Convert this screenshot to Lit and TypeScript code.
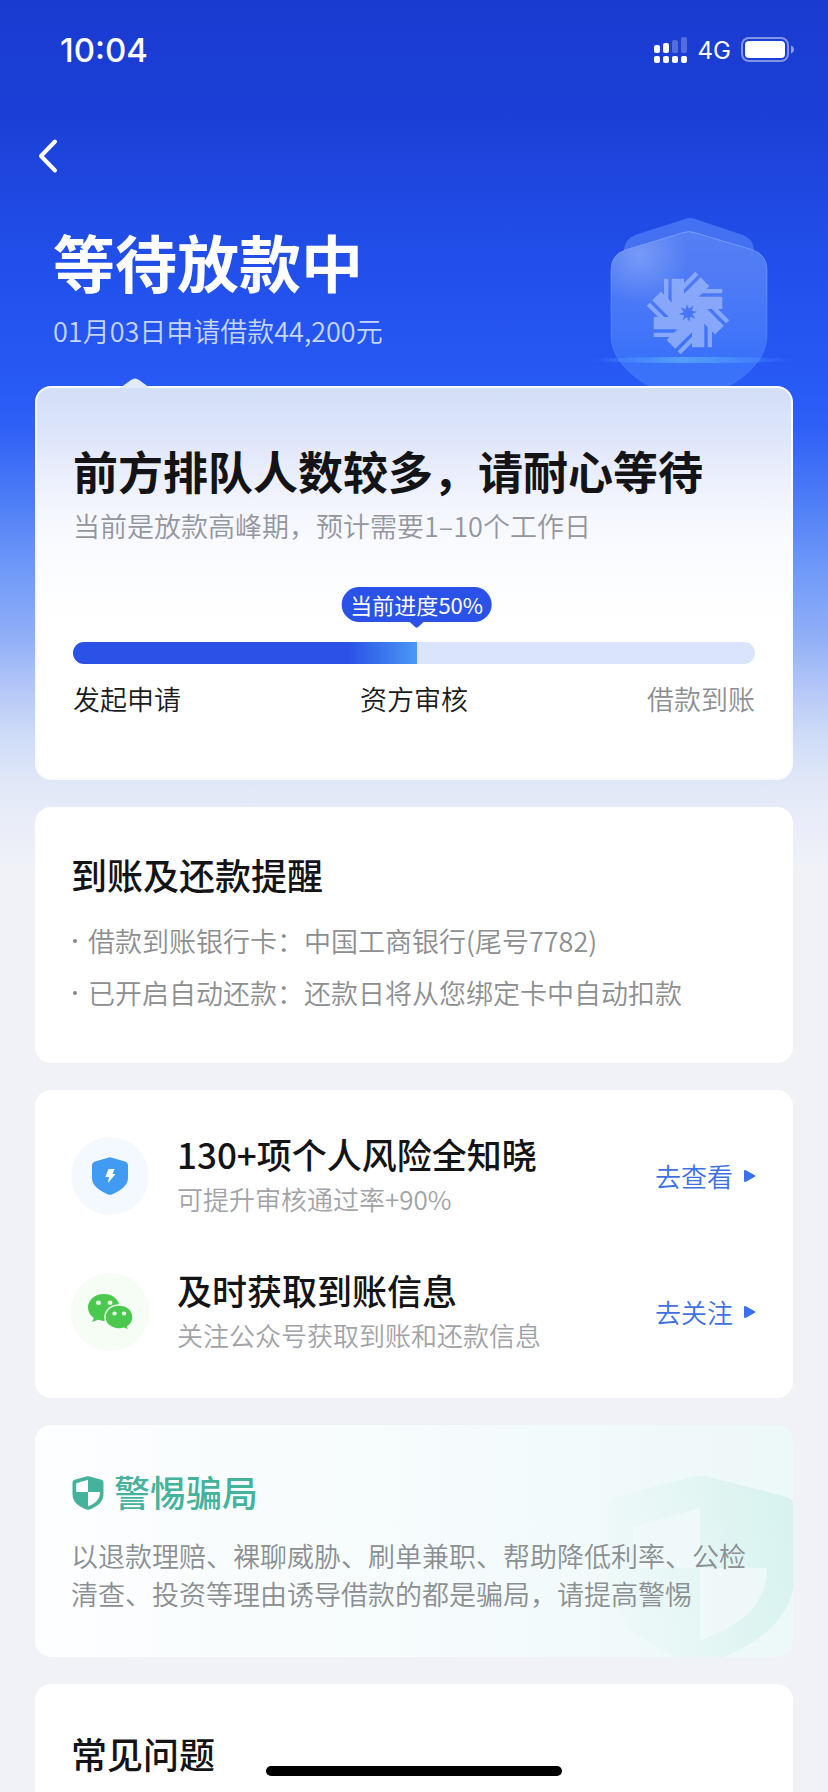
import { LitElement, html, css, svg } from "lit";
import { customElement, property } from "lit/decorators.js";

const shieldFront =
  "M682 233 Q689 230 696 233 L753 250 Q767 255 767 270 L767 335 C767 362 740 388 689 402 C638 388 611 362 611 335 L611 270 Q611 255 625 250 Z";
const shieldBack =
  "M682 220 Q690 216 698 220 L743 235 Q754 240 754 250 L754 330 L624 330 L624 250 Q624 240 635 235 Z";
const spokes = [0, 45, 90, 135, 180, 225, 270, 315];

@customElement("status-bar")
class StatusBar extends LitElement {
  static styles = css`
    :host {
      display: flex;
      align-items: center;
      justify-content: space-between;
      height: 100px;
      padding: 0 33px 0 60px;
      color: #fff;
      font-family: Inter, "Liberation Sans", sans-serif;
    }
    .time {
      font-size: 33px;
      font-weight: 500;
    }
    .right {
      display: flex;
      align-items: center;
      gap: 10px;
      font-size: 24px;
    }
  `;
  render() {
    return html`
      <span class="time">10:04</span>
      <div class="right">
        <svg width="34" height="28" viewBox="0 0 34 28" fill="#fff" aria-hidden="true">
          <rect x="0" y="9" width="6" height="8" rx="2" />
          <rect x="9" y="7" width="6" height="10" rx="2" />
          <rect x="18" y="4" width="6" height="13" rx="2" opacity=".25" />
          <rect x="27" y="1" width="6" height="16" rx="2" opacity=".25" />
          ${[0, 9, 18, 27].map((x) => svg`<rect x=${x} y="20" width="6" height="7" rx="2"></rect>`)}
        </svg>
        <span>4G</span>
        <svg width="54" height="26" viewBox="0 0 54 26" aria-hidden="true">
          <rect x="1" y="1" width="46" height="23" rx="7" fill="none" stroke="#fff" stroke-opacity=".45" stroke-width="2" />
          <rect x="4" y="4" width="40" height="17" rx="4" fill="#fff" />
          <path d="M50 8.500c2 .8 3 2 3 4s-1 3.200-3 4z" fill="#fff" opacity=".5" />
        </svg>
      </div>
    `;
  }
}

@customElement("hero-shield")
class HeroShield extends LitElement {
  static styles = css`
    :host {
      display: block;
      line-height: 0;
    }
  `;
  render() {
    return html`
      <svg width="205" height="170" viewBox="590 216 205 170" aria-hidden="true">
        <defs>
          <linearGradient id="front" x1="0" y1="0" x2="0" y2="1">
            <stop offset="0" stop-color="#557ff3" />
            <stop offset=".35" stop-color="#4c7af6" />
            <stop offset=".75" stop-color="#3a71fa" />
            <stop offset="1" stop-color="#3d74fb" />
          </linearGradient>
          <radialGradient id="shine" cx="640" cy="256" r="48" gradientUnits="userSpaceOnUse">
            <stop offset="0" stop-color="#fff" stop-opacity=".22" />
            <stop offset="1" stop-color="#fff" stop-opacity="0" />
          </radialGradient>
          <linearGradient id="rim" x1="0" y1="0" x2="0" y2="1">
            <stop offset="0" stop-color="#8fb2ff" stop-opacity=".6" />
            <stop offset="1" stop-color="#6f9dff" stop-opacity=".1" />
          </linearGradient>
          <linearGradient id="beam" x1="592" y1="0" x2="794" y2="0" gradientUnits="userSpaceOnUse">
            <stop offset="0" stop-color="#58a6ff" stop-opacity="0" />
            <stop offset=".45" stop-color="#58a6ff" stop-opacity=".85" />
            <stop offset="1" stop-color="#58a6ff" stop-opacity="0" />
          </linearGradient>
          <mask id="star" x="-130" y="-130" width="260" height="260" maskUnits="userSpaceOnUse">
            <rect x="-130" y="-130" width="260" height="260" fill="#fff" />
            ${spokes.map((a) => svg`<path d="M-8 0L-4 -28L8 0Z" transform="rotate(${a})" fill="#000"></path>`)}
            <circle r="14" fill="#000" />
          </mask>
        </defs>
        <path d=${shieldBack} fill="#4371f1" />
        <path d=${shieldFront} fill="url(#front)" />
        <path d=${shieldFront} fill="url(#shine)" />
        <path d=${shieldFront} fill="none" stroke="url(#rim)" />
        <g transform="translate(688 313) scale(.333)" opacity=".9" fill="#8fadfb">
          <g mask="url(#star)">
            <circle r="42" />
            ${spokes.map(
              (a) => svg`<g transform="rotate(${a})">
                <path d="M-72 -103H-59V-36H-72Z"></path>
                <path d="M-49 -103H-12V-10H-49Z"></path>
              </g>`,
            )}
          </g>
        </g>
        <ellipse cx="693" cy="360" rx="101" ry="3" fill="url(#beam)" />
      </svg>
    `;
  }
}

@customElement("loan-progress")
class LoanProgress extends LitElement {
  @property({ type: Number }) value = 0;

  static styles = css`
    :host {
      display: block;
    }
    .tip-row {
      display: flex;
    }
    .tip {
      display: flex;
      flex-direction: column;
      align-items: center;
      transform: translateX(-50%);
    }
    .tip-label {
      height: 35px;
      padding: 0 9px;
      border-radius: 18px;
      background: #2b52e8;
      color: #fff;
      font-size: 22px;
      line-height: 34px;
      white-space: nowrap;
    }
    .tip-arrow {
      display: block;
      width: 16px;
      height: 7px;
      margin-top: -1px;
    }
    .track {
      height: 22px;
      margin-top: 14px;
      border-radius: 11px;
      background: #dae4fa;
      overflow: hidden;
    }
    .fill {
      height: 100%;
      background: linear-gradient(90deg, #2b52e6 0 80%, #4a98f6);
    }
    .steps {
      display: flex;
      justify-content: space-between;
      margin-top: 16px;
      font-size: 27px;
      font-weight: 350;
      line-height: 38px;
      color: #1b1b1e;
    }
    .pending {
      color: #8e8f94;
    }
  `;
  render() {
    return html`
      <div class="tip-row">
        <div class="tip" style="margin-left:${this.value}%">
          <span class="tip-label">当前进度${Math.round(this.value)}%</span>
          <svg class="tip-arrow" viewBox="0 0 16 7" aria-hidden="true">
            <path d="M0 0H16L9.500 6Q8 7.500 6.500 6Z" fill="#2b52e8" />
          </svg>
        </div>
      </div>
      <div class="track" role="progressbar" aria-label="当前进度" aria-valuenow=${Math.round(this.value)}>
        <div class="fill" style="width:${this.value}%"></div>
      </div>
      <div class="steps">
        <span>发起申请</span>
        <span>资方审核</span>
        <span class="pending">借款到账</span>
      </div>
    `;
  }
}

@customElement("app-root")
class AppRoot extends LitElement {
  static styles = css`
    :host {
      display: flex;
      flex-direction: column;
      box-sizing: border-box;
      min-height: 100vh;
      font-family: "Noto Sans CJK SC", sans-serif;
      color: #141416;
      background: #f0f2f8
        linear-gradient(
          #1a3bd0 0,
          #1b3fd6 110px,
          #1f49e2 200px,
          #2453ef 310px,
          #285af6 390px,
          #3061f6 430px,
          #4f7ff6 505px,
          #709af8 570px,
          #90aff7 637px,
          #b3c6f8 687px,
          #cfdcf8 737px,
          #e1e8f7 785px,
          #eaedf9 825px,
          #f0f2f8 870px
        )
        no-repeat;
    }
    h1,
    h2,
    h3,
    p,
    ul {
      margin: 0;
      padding: 0;
      font-weight: 500;
    }
    .nav {
      display: flex;
      align-items: center;
      height: 112px;
      padding: 0 28px;
    }
    .back {
      display: flex;
      padding: 8px;
      border: 0;
      background: none;
    }
    .hero {
      display: flex;
      align-items: flex-end;
      justify-content: space-between;
      height: 174px;
      padding: 0 33px 0 53px;
    }
    .hero-text {
      align-self: flex-start;
    }
    .hero h1 {
      font-size: 62px;
      line-height: 98px;
      color: #fff;
      font-weight: 700;
    }
    .hero p {
      font-size: 27px;
      line-height: 42px;
      color: #c6d6fe;
      font-weight: 350;
    }
    .cards {
      display: flex;
      flex: 1;
      flex-direction: column;
      gap: 27px;
      padding: 0 35px;
    }
    .card {
      position: relative;
      border-radius: 16px;
      background: #fff;
      padding: 0 36px;
    }
    .status {
      padding: 51px 36px 60px;
      border: 2px solid #f8fbff;
      background: linear-gradient(#d3dff7 0, #dce5fa 45px, #e9edfc 80px, #f5f7fe 125px, #fbfcff 170px, #fff 240px);
    }
    .notch {
      position: absolute;
      top: -10px;
      left: 83px;
    }
    .status h2 {
      font-size: 45px;
      line-height: 64px;
      font-weight: 700;
    }
    .status p {
      margin-bottom: 38px;
      font-size: 27px;
      line-height: 46px;
      color: #94969e;
      font-weight: 350;
    }
    .title {
      font-size: 36px;
      line-height: 52px;
    }
    .reminder {
      padding-top: 41px;
      padding-bottom: 44px;
    }
    .list {
      display: grid;
      padding-top: 15px;
      list-style: none;
    }
    .list li {
      display: flex;
      align-items: center;
      gap: 11px;
      padding-left: 2px;
      font-size: 27px;
      line-height: 52px;
      color: #8d8e90;
      font-weight: 350;
    }
    .list li::before {
      content: "";
      width: 4px;
      height: 4px;
      border-radius: 2px;
      background: #87888a;
    }
    .services {
      display: grid;
      gap: 46px;
      padding-top: 41px;
      padding-bottom: 41px;
    }
    .service {
      display: flex;
      align-items: center;
    }
    .disc {
      display: grid;
      place-items: center;
      width: 78px;
      height: 78px;
      margin-right: 28px;
      border-radius: 50%;
      background: #f4f9ff;
    }
    .disc.green {
      background: #f5fdf5;
    }
    .service-text {
      flex: 1;
    }
    .service h3 {
      font-size: 35px;
      line-height: 46px;
    }
    .service p {
      font-size: 26px;
      line-height: 44px;
      color: #a2a3a7;
      font-weight: 350;
    }
    .go {
      display: flex;
      align-items: center;
      gap: 10px;
      padding-right: 1px;
      font-size: 26px;
      font-weight: 350;
      line-height: 40px;
      color: #4070e0;
      text-decoration: none;
    }
    .warning {
      overflow: hidden;
      padding-top: 40px;
      padding-bottom: 44px;
      background: linear-gradient(90deg, #fdfeff, #f5fbfc 55%, #edf8f8);
    }
    .watermark {
      position: absolute;
      right: 0;
      bottom: 0;
    }
    .warning-head {
      position: relative;
      display: flex;
      align-items: center;
      gap: 10px;
      padding-left: 1px;
      color: #45b39c;
    }
    .mark {
      margin-top: 4px;
    }
    .warning p {
      position: relative;
      padding-top: 20px;
      font-size: 27px;
      line-height: 38px;
      color: #8b8f92;
      font-weight: 350;
    }
    .faq {
      flex: 1;
      padding-top: 43px;
      border-radius: 16px 16px 0 0;
    }
    .home {
      position: fixed;
      bottom: 16px;
      left: 50%;
      width: 296px;
      height: 10px;
      border-radius: 5px;
      background: #000;
      transform: translateX(-50%);
    }
  `;

  private services = [
    {
      title: "130+项个人风险全知晓",
      text: "可提升审核通过率+90%",
      link: "去查看",
      tone: "",
      icon: html`<svg width="36" height="38" viewBox="0 0 36 38" aria-hidden="true">
        <path d="M16 .7Q18 0 20 .7L33 4.500Q36 5.500 36 8.500V21C36 28 30 33 20 37.400Q18 38.200 16 37.400C6 33 0 28 0 21V8.500Q0 5.500 3 4.500Z" fill="#429bf2" />
        <path d="M16.500 12H22.500L20.500 17H23.500L16 26L17 20H13.200Z" fill="#fff" />
      </svg>`,
    },
    {
      title: "及时获取到账信息",
      text: "关注公众号获取到账和还款信息",
      link: "去关注",
      tone: "green",
      icon: html`<svg width="46" height="38" viewBox="0 0 46 38" aria-hidden="true">
        <path d="M17 1C7.500 1 1 7.200 1 14.500C1 19 3.300 22.500 7 25L5 29L11 26.800C13 27.500 15 27.900 17 27.900C26 27.900 32.500 22 32.500 14.500S26 1 17 1Z" fill="#4bc94f" />
        <path d="M32 12C24 12 18 17.300 18 24.200S24 36 32 36C33.800 36 35.500 35.700 37 35.200L42 37.300L40.800 33.500C44 31.300 46 28 46 24.200C46 17.300 40 12 32 12Z" fill="#4bc94f" stroke="#f3fcf3" stroke-width="1.500" />
        <ellipse cx="11.500" cy="9.800" rx="2.500" ry="2.200" fill="#e9fbe8" />
        <ellipse cx="23" cy="9.800" rx="2.500" ry="2.200" fill="#e9fbe8" />
        <ellipse cx="27.500" cy="20.500" rx="2.200" ry="1.900" fill="#e9fbe8" />
        <ellipse cx="37" cy="20.500" rx="2.200" ry="1.900" fill="#e9fbe8" />
      </svg>`,
    },
  ];

  render() {
    return html`
      <status-bar></status-bar>
      <nav class="nav">
        <button class="back" aria-label="返回">
          <svg width="24" height="36" viewBox="0 0 24 36" aria-hidden="true">
            <path d="M19 3.500L5 18L19 32.500" fill="none" stroke="#fff" stroke-width="4" stroke-linecap="round" stroke-linejoin="round" />
          </svg>
        </button>
      </nav>
      <header class="hero">
        <div class="hero-text">
          <h1>等待放款中</h1>
          <p>01月03日申请借款44,200元</p>
        </div>
        <hero-shield></hero-shield>
      </header>

      <main class="cards">
        <section class="card status">
          <svg class="notch" width="30" height="10" viewBox="0 0 30 10" aria-hidden="true">
            <path d="M0 10L2 8.500L11 2Q15 -1 19 2L28 8.500L30 10Z" fill="#e2ebfb" />
          </svg>
          <h2>前方排队人数较多，请耐心等待</h2>
          <p>当前是放款高峰期，预计需要1–10个工作日</p>
          <loan-progress .value=${50.4}></loan-progress>
        </section>

        <section class="card reminder">
          <h2 class="title">到账及还款提醒</h2>
          <ul class="list">
            <li>借款到账银行卡：中国工商银行(尾号7782)</li>
            <li>已开启自动还款：还款日将从您绑定卡中自动扣款</li>
          </ul>
        </section>

        <section class="card services">
          ${this.services.map(
            (s) => html`
              <article class="service">
                <span class="disc ${s.tone}">${s.icon}</span>
                <div class="service-text">
                  <h3>${s.title}</h3>
                  <p>${s.text}</p>
                </div>
                <a class="go" href="#">
                  ${s.link}
                  <svg width="13" height="14" viewBox="0 0 13 14" aria-hidden="true">
                    <path d="M1 2.500V11.500Q1 13.500 2.800 12.700L11.500 8Q13 7 11.500 6L2.800 1.300Q1 .5 1 2.500Z" fill="#3a6fee" />
                  </svg>
                </a>
              </article>
            `,
          )}
        </section>

        <section class="card warning">
          <svg class="watermark" width="190" height="182" viewBox="0 0 190 182" aria-hidden="true">
            <defs>
              <linearGradient id="wm" x1="0" y1=".4" x2="1" y2=".2">
                <stop offset="0" stop-color="#c9efe9" stop-opacity=".08" />
                <stop offset=".5" stop-color="#c9efe9" stop-opacity=".32" />
                <stop offset="1" stop-color="#c9efe9" stop-opacity=".62" />
              </linearGradient>
            </defs>
            <path
              fill="url(#wm)"
              fill-rule="evenodd"
              d="M88 2Q97 -1 106 2L184 22Q192 25 192 34V95C192 140 160 172 97 190C34 172 5 140 5 95V34Q5 25 13 22ZM97 33L30 52V93H97ZM97 93V165C140 150 164 128 164 93Z"
            />
          </svg>
          <div class="warning-head">
            <svg class="mark" width="32" height="34" viewBox="0 0 32 34" aria-hidden="true">
              <path
                fill="#45b39c"
                fill-rule="evenodd"
                d="M14.500 .6Q16 0 17.500 .6L29.500 3.800Q31.500 4.500 31.500 6.500V18C31.500 25.500 26 30.500 17.500 33.500Q16 34 14.500 33.500C6 30.500 .5 25.500 .5 18V6.500Q.5 4.500 2.500 3.800ZM16 3.800L4.200 7.200V16H16ZM16 16V30.300C23.500 27.500 28 23.500 28 16Z"
              />
            </svg>
            <h2 class="title">警惕骗局</h2>
          </div>
          <p>以退款理赔、裸聊威胁、刷单兼职、帮助降低利率、公检清查、投资等理由诱导借款的都是骗局，请提高警惕</p>
        </section>

        <section class="card faq">
          <h2 class="title">常见问题</h2>
        </section>
      </main>
      <div class="home"></div>
    `;
  }
}
